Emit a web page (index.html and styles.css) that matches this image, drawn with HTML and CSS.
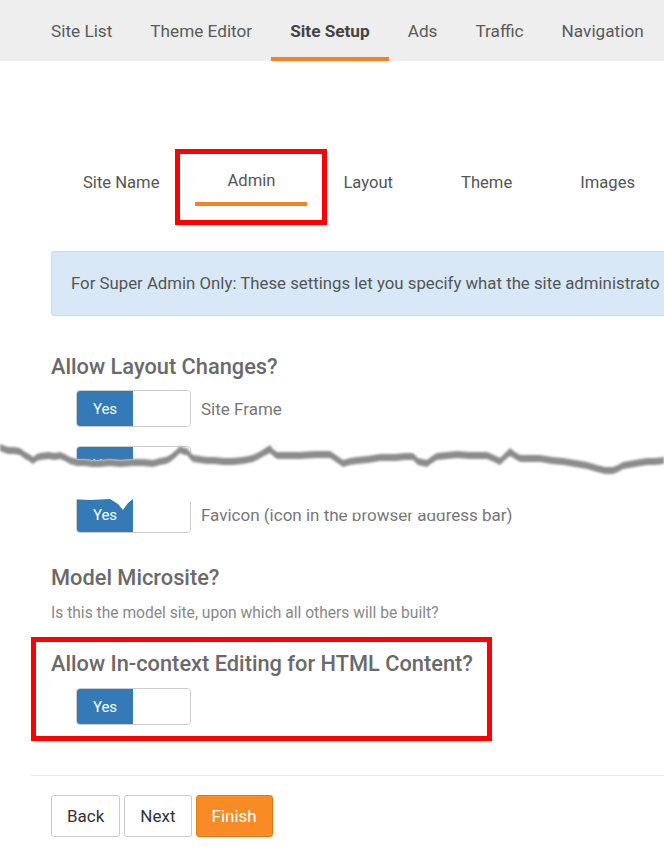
FILE: index.html
```html
<!DOCTYPE html>
<html lang="en">
<head>
    <meta charset="UTF-8">
    <title>Site Setup - Admin</title>
    <link rel="stylesheet" href="styles.css">
</head>
<body>
    <nav class="topnav">
        <a class="topnav-item">Site List</a>
        <a class="topnav-item">Theme Editor</a>
        <a class="topnav-item active">Site Setup</a>
        <a class="topnav-item">Ads</a>
        <a class="topnav-item">Traffic</a>
        <a class="topnav-item">Navigation</a>
    </nav>

    <div class="content">
        <div class="tabs">
            <a class="tab">Site Name</a>
            <a class="tab active">Admin</a>
            <a class="tab">Layout</a>
            <a class="tab">Theme</a>
            <a class="tab">Images</a>
        </div>

        <div class="section">
            <div class="info-box">For Super Admin Only: These settings let you specify what the site administrato</div>

            <h2 class="heading heading-first">Allow Layout Changes?</h2>
            <div class="toggle-row">
                <div class="toggle"><span class="toggle-on">Yes</span><span class="toggle-off"></span></div>
                <span class="toggle-label">Site Frame</span>
            </div>
            <div class="toggle-row">
                <div class="toggle"><span class="toggle-on">Yes</span><span class="toggle-off"></span></div>
            </div>
            <div class="toggle-row after-tear">
                <div class="toggle"><span class="toggle-on">Yes</span><span class="toggle-off"></span></div>
                <span class="toggle-label">Favicon (icon in the browser address bar)</span>
            </div>

            <h2 class="heading heading-model">Model Microsite?</h2>
            <p class="help">Is this the model site, upon which all others will be built?</p>
        </div>

        <div class="highlight">
            <h2 class="heading">Allow In-context Editing for HTML Content?</h2>
            <div class="toggle-row">
                <div class="toggle"><span class="toggle-on">Yes</span><span class="toggle-off"></span></div>
            </div>
        </div>

        <hr class="divider">

        <div class="buttons">
            <button class="btn">Back</button>
            <button class="btn">Next</button>
            <button class="btn btn-primary">Finish</button>
        </div>
    </div>

    <!-- torn paper cut over the skipped part of the form -->
    <svg class="tear" width="664" height="75" viewBox="0 0 664 75">
        <defs>
            <filter id="soft" x="-5%" y="-50%" width="110%" height="200%">
                <feGaussianBlur stdDeviation="1"/>
            </filter>
        </defs>
        <polygon fill="#fff" points="0,4 8,7 14,7 20,8 25,12 29,14 33,17 37,14 40,13 48,12 55,13 60,12 65,14 70,17 77,19 85,19 92,20 100,20 110,19 120,20 133,19 143,19 153,20 160,18 166,17 170,15 175,11 180,6 184,8 187,8 190,12 193,15 200,16 207,17 215,17 224,18 233,18 243,17 253,15 259,12 264,9 270,5 273,9 277,12 288,12 300,12 315,11 330,11 336,15 343,20 350,18 357,17 368,16 380,14 395,14 405,13 413,13 418,18 427,20 432,16 437,13 447,12 457,11 470,12 487,12 494,15 500,18 505,13 510,8 515,12 520,15 530,15 540,15 552,17 563,18 575,20 587,22 597,25 605,27 613,27 618,25 623,22 635,20 647,18 655,18 664,17 664,62 560,63 500,62 470,63 462,70 440,73 420,73 380,72 345,73 330,71 318,69 300,66 260,63 200,62 133,59 128,63 123,70 118,64 110,59 90,60 70,59 40,61 0,60"/>
        <polygon fill="#8c8c8c" filter="url(#soft)" points="0,4 8,7 14,7 20,8 25,12 29,14 33,17 37,14 40,13 48,12 55,13 60,12 65,14 70,17 77,19 85,19 92,20 100,20 110,19 120,20 133,19 143,19 153,20 160,18 166,17 170,15 175,11 180,6 184,8 187,8 190,12 193,15 200,16 207,17 215,17 224,18 233,18 243,17 253,15 259,12 264,9 270,5 273,9 277,12 288,12 300,12 315,11 330,11 336,15 343,20 350,18 357,17 368,16 380,14 395,14 405,13 413,13 418,18 427,20 432,16 437,13 447,12 457,11 470,12 487,12 494,15 500,18 505,13 510,8 515,12 520,15 530,15 540,15 552,17 563,18 575,20 587,22 597,25 605,27 613,27 618,25 623,22 635,20 647,18 655,18 664,17 664,24 655,25 647,25 635,27 623,29 618,32 613,34 605,34 597,32 587,29 575,27 563,25 552,24 540,22 530,22 520,22 515,19 510,16 505,20 500,25 494,22 487,19 470,19 457,18 447,19 437,20 432,23 427,27 418,25 413,20 405,20 395,21 380,21 368,23 357,24 350,25 343,27 336,22 330,18 315,18 300,19 288,19 277,19 273,16 270,13 264,16 259,19 253,22 243,24 233,25 224,25 215,24 207,24 200,23 193,22 190,19 187,15 184,15 180,13 175,18 170,22 166,24 160,25 153,27 143,26 133,26 120,27 110,26 100,27 92,27 85,26 77,26 70,24 65,21 60,19 55,20 48,19 40,20 37,21 33,24 29,21 25,19 20,15 14,14 8,14 0,11"/>
    </svg>
</body>
</html>
```

FILE: styles.css
```css
* {
    box-sizing: border-box;
    margin: 0;
    padding: 0;
}

body {
    position: relative;
    font-family: 'Roboto', 'Liberation Sans', sans-serif;
    color: #666;
    background: #fff;
    overflow: hidden;
    width: 664px;
}

/* top navigation */
.topnav {
    display: flex;
    height: 61px;
    padding-left: 32px;
    background-color: #eeeeee;
}

.topnav-item {
    display: flex;
    align-items: center;
    padding: 4px 19px 0;
    font-size: 17.2px;
    color: #5a5a5a;
    border-bottom: 4px solid transparent;
    white-space: nowrap;
}

.topnav-item.active {
    font-weight: 700;
    color: #444;
    border-bottom-color: #f5822a;
}

.content {
    padding-left: 31px;
}

/* wizard tabs */
.tabs {
    display: flex;
    align-items: flex-start;
    margin-top: 101px;
    padding-left: 20px;
}

.tab {
    position: relative;
    padding: 10px 32px 12px;
    margin-right: 4px;
    font-size: 16.6px;
    line-height: 22px;
    color: #555;
    white-space: nowrap;
}

.tab.active {
    padding-top: 8px;
    padding-bottom: 10px;
    border-bottom: 4px solid #f5822a;
}

/* red annotation box around the active tab */
.tab.active::before {
    content: '';
    position: absolute;
    left: -20px;
    right: -20px;
    top: -13px;
    bottom: -23px;
    border: 5px solid #ff0000;
}

.section {
    padding-left: 20px;
}

.info-box {
    width: 640px;
    margin-top: 45px;
    padding: 20px 0 21px 19px;
    font-size: 16.8px;
    line-height: 22px;
    color: #555;
    white-space: nowrap;
    background-color: #d9e8f7;
    border: 1px solid #c3daf0;
    border-right: none;
    border-radius: 4px 0 0 4px;
}

.heading {
    font-size: 21.8px;
    line-height: 26px;
    font-weight: 500;
    color: #6a6a6a;
    white-space: nowrap;
}

.heading-first {
    margin-top: 38px;
}

.heading-model {
    margin-top: 32px;
}

.toggle-row {
    display: flex;
    align-items: center;
    margin-top: 10px;
    padding-left: 25px;
}

.toggle-row + .toggle-row {
    margin-top: 19px;
}

.toggle-row.after-tear {
    margin-top: 13px;
}

.toggle {
    display: flex;
    width: 115px;
    height: 37px;
    border: 1px solid #cccccc;
    border-radius: 4px;
    overflow: hidden;
}

.toggle-on {
    display: flex;
    align-items: center;
    justify-content: center;
    width: 56px;
    font-size: 15px;
    color: #fff;
    background-color: #337ab7;
}

.toggle-off {
    flex: 1;
    background: #fff;
}

.toggle-label {
    margin-left: 10px;
    font-size: 17px;
    color: #777;
}

.help {
    margin-top: 12px;
    font-size: 15.6px;
    line-height: 20px;
    color: #888;
}

/* red annotation box */
.highlight {
    width: 461px;
    margin-top: 14px;
    padding: 9px 15px 11px;
    border: 5px solid #ff0000;
}

.highlight .toggle-row {
    margin-top: 11px;
}

.divider {
    margin-top: 34px;
    border: none;
    border-top: 1px solid #e6e6e6;
}

.buttons {
    display: flex;
    gap: 4px;
    margin-top: 19px;
    padding-left: 20px;
}

.btn {
    height: 42px;
    padding: 0 15px;
    font-family: inherit;
    font-size: 17px;
    color: #333;
    background: #fff;
    border: 1px solid #cccccc;
    border-radius: 3px;
}

.btn-primary {
    color: #fff;
    background-color: #f98b24;
    border-color: #e27a14;
}

.tear {
    position: absolute;
    left: 0;
    top: 440px;
}
```
